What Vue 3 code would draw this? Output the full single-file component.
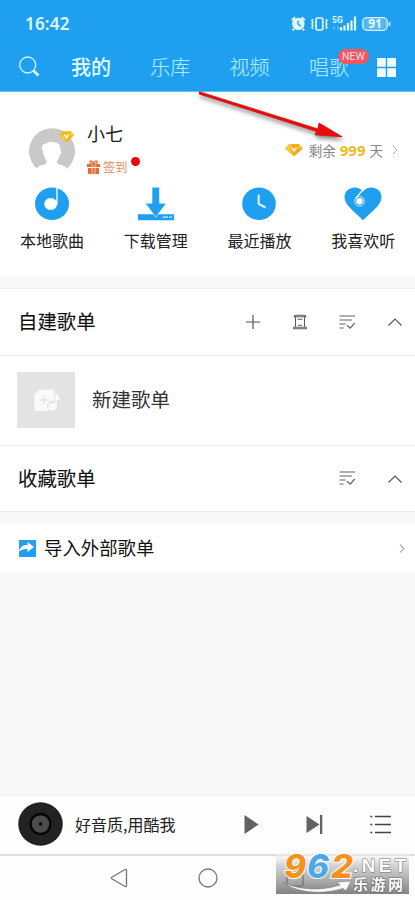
<script setup>
const tabs = [
  { label: '我的', active: true },
  { label: '乐库' },
  { label: '视频' },
  { label: '唱歌', badge: 'NEW' },
]
const shortcuts = [
  { id: 'local', label: '本地歌曲' },
  { id: 'download', label: '下载管理' },
  { id: 'recent', label: '最近播放' },
  { id: 'like', label: '我喜欢听' },
]
</script>

<template>
  <div class="screen">
    <header class="top">
      <div class="status">
        <span class="clock">16:42</span>
        <svg class="status-icons" width="102" height="18" viewBox="0 0 102 18">
          <circle cx="8.3" cy="9" r="6.2" fill="#e2f8ff" />
          <path d="M1.800 5.200 5 2.300M14.800 5.200 11.600 2.300M3.800 13.800 2.500 15.300M12.800 13.800l1.300 1.500" stroke="#e2f8ff" stroke-width="2" />
          <path d="M8 5.400V9l2.600 2.300" fill="none" stroke="#1f9ff0" stroke-width="1.300" />
          <rect x="26" y="3" width="6.800" height="12" rx="1.500" fill="none" stroke="#e2f8ff" stroke-width="1.700" />
          <path d="M23 4.200l-1.200 1.600 1.200 1.600-1.200 1.600L23 10.600l-1.200 1.600 1.200 1.600M35.800 4.200l1.200 1.600-1.200 1.600 1.200 1.600-1.200 1.600 1.200 1.600-1.200 1.600" fill="none" stroke="#e2f8ff" stroke-width="1.400" />
          <text x="42" y="8" class="net">5G</text>
          <path d="M45 11.500l-2 1.500 2 1.500M47 11.500l2 1.500-2 1.500" stroke="#7ccaf8" fill="none" />
          <path d="M51 15.500v-3.500M54.500 15.500v-5M58 15.500v-7.500M61.500 15.500V5.500M65 15.500V1.500" stroke="#e2f8ff" stroke-width="2.200" />
          <rect x="72.800" y="2.700" width="24.400" height="12.600" rx="4" fill="#54b6f4" stroke="#d5f3ff" stroke-width="1.300" />
          <path d="M99.500 7v4" stroke="#d5f3ff" stroke-width="1.700" />
          <text x="85" y="13.200" text-anchor="middle" class="level">91</text>
        </svg>
      </div>
      <nav class="nav">
        <svg class="search" width="22" height="22" viewBox="0 0 22 22" fill="none" stroke="#d6faff">
          <circle cx="8.700" cy="9" r="8" stroke-width="1.300" />
          <path d="M14.200 14.500l5.300 5" stroke-width="2.700" />
        </svg>
        <span v-for="t in tabs" :key="t.label" class="tab" :class="{ active: t.active }">
          {{ t.label }}<i v-if="t.badge" class="badge">{{ t.badge }}</i>
        </span>
        <svg class="grid" width="19" height="19" viewBox="0 0 19 19" fill="#f1fdff">
          <path d="M0 0h8.800v8.800H0zM10.200 0H19v8.800h-8.800zM0 10.200h8.800V19H0zM10.200 10.200H19V19h-8.800z" />
        </svg>
      </nav>
    </header>

    <section class="profile">
      <div class="avatar">
        <svg width="46" height="42" viewBox="0 0 46 42">
          <path d="M8.500 41A23 23 0 1 1 37.500 41Z" fill="#c9c9c9" />
          <path d="M7 42c1-3.500 4-4.500 7.500-5.300 3-.8 4-2 3-4.200-1.800-1.800-2.500-4-2.700-6-1.300-.8-1-2.500-.3-3-2-1.500-2.300-4-1-5.500.3-1.500 1.500-2.500 3-2 2.500-2.600 6.500-3 9.500-1.500 4 .3 6 3.500 5.700 8.500 1.300.7.800 3-.7 3.500-.3 2.500-1.300 4.500-2.800 6-.7 2.500.3 3.500 3.300 4.200 3.500.8 6 2 7 5.300z" fill="#fff" />
        </svg>
        <svg class="avatar-gem" width="15" height="12" viewBox="0 0 18 14">
          <path d="M4 0h10l4 5-9 9-9-9z" fill="#f7b41e" />
          <path d="M0 5h5l4 9zM14 0l4 5h-5z" fill="#f5cd4c" />
          <path d="M6.500 4 9 8l2.500-4" fill="none" stroke="#fff8c8" stroke-width="2" />
        </svg>
      </div>
      <div class="who">
        <div class="name">小七</div>
        <div class="checkin">
          <svg width="13" height="14" viewBox="0 0 13 14">
            <path d="M0 4h13v3H0zM1 8h11v6H1z" fill="#e96b3c" />
            <path d="M6.500 4C3 4 2.300 2.500 3 1.400 4 .1 6 1.500 6.500 4 7 1.500 9 .1 10 1.400c.7 1.100 0 2.600-3.500 2.600" fill="none" stroke="#e96b3c" stroke-width="1.200" />
            <path d="M5 4v10M8 4v10" stroke="#fbd9c8" stroke-width=".8" />
          </svg>
          <span>签到</span><b class="dot"></b>
        </div>
      </div>
      <div class="vip">
        <svg width="18" height="14" viewBox="0 0 18 14">
          <path d="M4 1h10l4 4.500-9 8-9-8z" fill="#f5a91f" />
          <path d="M0 5.500h5l4 8zM14 1l4 4.500h-5zM4 1h3L5 5.500H0z" fill="#f6c946" />
          <path d="M6.500 4.500 9 8l2.500-3.500" fill="none" stroke="#fff5bd" stroke-width="1.800" />
        </svg>
        <span class="left">剩余</span><span class="days">999</span><span>天</span>
        <svg class="more" width="6" height="10" viewBox="0 0 6 10" fill="none" stroke="#b5b5b5"><path d="M1 1l4 4-4 4" /></svg>
      </div>
    </section>

    <section class="shortcuts">
      <div v-for="s in shortcuts" :key="s.id" class="shortcut">
        <svg v-if="s.id === 'local'" width="38" height="34" viewBox="0 0 38 34">
          <ellipse cx="19" cy="16.700" rx="17" ry="16.300" fill="#1f9ff0" />
          <ellipse cx="17.700" cy="17" rx="6.500" ry="6" fill="#fff" />
          <path d="M24 1V17" stroke="#fff" stroke-width="1.300" />
        </svg>
        <svg v-else-if="s.id === 'download'" width="38" height="34" viewBox="0 0 38 34">
          <path d="M1 27.200h36v6H1z" fill="#1f9ff0" />
          <path d="M15 .2h7.500v16h6.800L18.800 30.200 8.200 16.200H15z" fill="#1f9ff0" stroke="#fff" stroke-width=".6" />
          <path d="M25.500 30.200H31M32 30.200h3" stroke="#c9efff" stroke-width="1.300" />
        </svg>
        <svg v-else-if="s.id === 'recent'" width="38" height="34" viewBox="0 0 38 34">
          <ellipse cx="19" cy="16.700" rx="16.800" ry="16.300" fill="#1f9ff0" />
          <path d="M18.700 7.500V17l6.800 3.500" fill="none" stroke="#e0f8ff" stroke-width="2" />
        </svg>
        <svg v-else width="38" height="34" viewBox="0 0 38 34">
          <path d="M19 33.200C12 26 .5 18.500.5 10 .5 0 14-2.800 19 4.500 24-2.800 37.500 0 37.500 10 37.500 18.500 26 26 19 33.200z" fill="#1f9ff0" />
          <circle cx="15.500" cy="14.300" r="3.200" fill="#fff" />
          <circle cx="15.500" cy="14.300" r="4.800" fill="none" stroke="#e8faff" stroke-width=".9" />
          <path d="M11.300 12 18.700 3" stroke="#fff" stroke-width="1.200" />
        </svg>
        <span>{{ s.label }}</span>
      </div>
    </section>

    <section class="row own">
      <h2>自建歌单</h2>
      <svg class="plus" width="14" height="14" viewBox="0 0 14 14" stroke="#555" stroke-width="1.200"><path d="M7 0v14M0 7h14" /></svg>
      <svg class="restore" width="14" height="16" viewBox="0 0 14 16" fill="none" stroke="#5c5c5c" stroke-width="1.100">
        <path d="M3 1.300h8c1.500 0 2 .7 2 1.500H1c0-.8.500-1.500 2-1.500zM2.500 3v10M11.500 3v10M.8 13.200h12.400v1.600H.8zM4.500 5.300h5M5 11.200h4" />
      </svg>
      <svg class="sort" width="17" height="15" viewBox="0 0 17 15" fill="none" stroke="#626262" stroke-width="1.200">
        <path d="M.5 1h15.500M.5 5h12.500M.5 9h6M.5 13h4M8 10.200l3.200 3 4.500-5.200" />
      </svg>
      <svg class="up" width="14" height="8" viewBox="0 0 14 8" fill="none" stroke="#555" stroke-width="1.200"><path d="M.5 7.500 7 1l6.500 6.500" /></svg>
    </section>

    <section class="create">
      <div class="tile">
        <svg width="28" height="23" viewBox="0 0 28 23">
          <path d="M5.500.5h13c1.500 0 2 .5 2 2V22H2.500C1 22 .5 21.500.5 20V5.500z" fill="#fafafa" />
          <path d="M10 6.500v9M5.500 11h9" stroke="#dedede" />
          <circle cx="18.500" cy="17.300" r="5.600" fill="#e3e3e3" />
          <path d="M20 5h5v13h-5z" fill="#e3e3e3" />
          <ellipse cx="18.500" cy="17.800" rx="4.300" ry="3.800" fill="#fafafa" />
          <path d="M21.200 5.500h2.300c.5 2.500 3 3.500 3.200 6.500-1-1-2.200-1.300-3.900-1.500V18h-1.600z" fill="#fafafa" />
        </svg>
      </div>
      <span>新建歌单</span>
    </section>

    <section class="row saved">
      <h2>收藏歌单</h2>
      <svg class="sort" width="17" height="15" viewBox="0 0 17 15" fill="none" stroke="#626262" stroke-width="1.200">
        <path d="M.5 1h15.500M.5 5h12.500M.5 9h6M.5 13h4M8 10.200l3.200 3 4.500-5.200" />
      </svg>
      <svg class="up" width="14" height="8" viewBox="0 0 14 8" fill="none" stroke="#555" stroke-width="1.200"><path d="M.5 7.500 7 1l6.500 6.500" /></svg>
    </section>

    <section class="import">
      <svg width="17" height="17" viewBox="0 0 17 17">
        <path d="M0 0h17v17H0z" fill="#229ff0" />
        <path d="M0 11.800C1 6.500 4 5 8.500 5V2L15 7l-6.500 5V9C5 8.800 2 9.500 0 11.800z" fill="#fff" />
      </svg>
      <span>导入外部歌单</span>
      <svg class="more" width="6" height="9" viewBox="0 0 6 9" fill="none" stroke="#b0b0b0" stroke-width="1.200"><path d="M1 .5l4 4-4 4" /></svg>
    </section>

    <div class="blank"></div>

    <footer class="player">
      <svg class="disc" width="45" height="44" viewBox="0 0 45 44">
        <ellipse cx="22.500" cy="22" rx="22.300" ry="21.700" fill="#222" />
        <circle cx="22.500" cy="22" r="11" fill="#030303" />
        <circle cx="22.500" cy="22" r="8.800" fill="#4a4a4a" />
        <circle cx="22.500" cy="22" r="5" fill="none" stroke="#555" stroke-width=".7" />
        <circle cx="22.500" cy="22" r="1.700" fill="#050505" />
      </svg>
      <span class="song">好音质,用酷我</span>
      <svg class="play" width="15" height="19" viewBox="0 0 15 19"><path d="M.5 0 14.500 9.500.5 19z" fill="#626262" /></svg>
      <svg class="next" width="17" height="19" viewBox="0 0 17 19"><path d="M.5 1 13.500 9.500.5 18z" fill="#626262" /><path d="M14 0h2.300v19H14z" fill="#626262" /></svg>
      <svg class="queue" width="21" height="19" viewBox="0 0 21 19" stroke="#444" stroke-width="1.700">
        <path d="M.3 1.500h2M5 1.500h16M.3 9.500h2M5 9.500h16M.3 17.500h2M5 17.500h16" />
      </svg>
    </footer>

    <footer class="system">
      <svg class="back" width="18" height="20" viewBox="0 0 18 20" fill="none" stroke="#777" stroke-width="1.300"><path d="M15 1.500 1.800 9.300q-1 .7 0 1.400L15 18.500q1.500.5 1.500-1v-15q0-1.500-1.500-1z" /></svg>
      <svg class="home" width="20" height="20" viewBox="0 0 20 20" fill="none" stroke="#777" stroke-width="1.300"><circle cx="10" cy="10" r="9" /></svg>
    </footer>

    <svg class="arrow" width="156" height="60" viewBox="0 0 156 60">
      <path d="M3.500 1.800 122 39 123 33 146 46.800 119 44.800 120.500 41.500 3 4z" fill="#ec0a0a" stroke="#cc1212" stroke-width=".8" />
    </svg>

    <svg class="watermark" width="133" height="42" viewBox="0 0 133 42">
      <defs>
        <linearGradient id="shade" x2="0" y2="1">
          <stop offset="0" stop-color="#fff" stop-opacity=".35" />
          <stop offset=".3" stop-color="#ccc" stop-opacity=".8" />
          <stop offset="1" stop-color="#777" stop-opacity=".92" />
        </linearGradient>
      </defs>
      <path d="M0 0h133v42H0z" fill="url(#shade)" />
      <rect x="11" y="18" width="16" height="16" rx="1.500" fill="none" stroke="#6e6e6e" stroke-width="1.200" />
      <path d="M7 30.500c15 7 37 9 57 2.500l-3-3 14-1-5 10-3-2.500C46 43 21 41 7 30.500z" fill="#fafafa" stroke="#777" stroke-width=".6" />
      <g class="digits">
        <text x="8" y="25.500" textLength="22" lengthAdjust="spacingAndGlyphs" fill="#f7921e">9</text>
        <text x="31" y="25.500" textLength="22" lengthAdjust="spacingAndGlyphs" fill="#4ba9e6">6</text>
        <text x="55" y="25.500" textLength="22" lengthAdjust="spacingAndGlyphs" fill="#f7921e">2</text>
      </g>
      <text x="77" y="20" textLength="53" lengthAdjust="spacing" class="net-name">.NET</text>
      <text x="77" y="37.500" textLength="50" class="site">乐游网</text>
    </svg>
  </div>
</template>

<style>
body { background: #f8f8f8; overflow: hidden; }
</style>

<style scoped>
* { box-sizing: border-box; }
svg { display: block; flex: none; }
.screen {
  position: relative;
  display: flex;
  flex-direction: column;
  width: 415px;
  height: 900px;
  overflow: hidden;
  background: #f8f8f8;
  color: #222;
  font-family: "Noto Sans CJK SC", sans-serif;
  white-space: nowrap;
}
.top { height: 92px; background: #1f9ff0; border-bottom: 1px solid #68bbef; }
.status { display: flex; height: 47px; align-items: center; padding: 0 23px 0 25px; justify-content: space-between; color: #dcfaff; }
.clock { font: 600 17px/20px "Noto Sans", sans-serif; letter-spacing: .2px; }
.net { font: bold 8.500px Roboto, sans-serif; fill: #e2f8ff; }
.level { font: bold 12px "Noto Sans", sans-serif; fill: #f0fcff; }
.nav { display: flex; height: 40px; align-items: center; padding: 0 19px; }
.search { margin-right: 30px; }
.tab { position: relative; width: 40px; margin-right: 39.300px; color: #aee8ff; font-size: 20px; line-height: 30px; font-weight: 300; -webkit-text-stroke: .2px #aee8ff; }
.tab.active { color: #e3fdff; font-weight: 500; -webkit-text-stroke: 0; }
.tab:nth-last-child(2) { margin-right: 28.500px; }
.badge { position: absolute; left: 29px; top: -3px; width: 31px; height: 15px; border-radius: 8px; background: #ee5861; color: #ffdfe4; font: 10.500px/15px Roboto, sans-serif; text-align: center; -webkit-text-stroke: 0; }
.profile { display: flex; height: 91px; background: #fff; padding: 36px 17px 0 29px; }
.avatar { position: relative; width: 46px; height: 42px; }
.avatar-gem { position: absolute; left: 30px; top: 3px; }
.who { margin-left: 12px; }
.name { height: 26px; margin-top: -8px; font-size: 18px; line-height: 26px; }
.checkin { display: flex; align-items: center; height: 18px; margin-top: 12px; color: #e88863; font-size: 12.300px; }
.checkin span { margin-left: 3px; }
.dot { width: 9px; height: 9px; margin: -11px 0 0 3px; border-radius: 50%; background: #f00505; }
.vip { display: flex; align-items: center; height: 20px; margin: 12px 0 0 auto; color: #858585; font-size: 13.500px; line-height: 20px; }
.vip span { margin-top: -1px; }
.vip .left { margin-left: 6px; }
.vip .days { margin: 0 4px; color: #efb91f; font: bold 15px/20px "Noto Sans", sans-serif; }
.more { margin-left: 9px; }
.shortcuts { display: grid; grid-template-columns: repeat(4, 103.800px); height: 94px; background: #fff; padding-top: 4px; }
.shortcut { display: flex; flex-direction: column; align-items: center; font-size: 16px; line-height: 24px; }
.shortcut span { margin-top: 7px; }
.row { display: flex; align-items: center; background: #fff; padding: 0 13.500px 0 18px; border-top: 1px solid #f1f1f1; border-bottom: 1px solid #eee; }
.own { height: 68px; margin-top: 11px; }
h2 { margin: -2px auto 0 0; font-size: 19.400px; font-weight: 400; line-height: 30px; color: #111; -webkit-text-stroke: .1px #111; }
.restore { margin-left: 33px; }
.sort { margin-left: 32px; }
.up { margin-left: 32px; }
.create { display: flex; align-items: center; height: 89px; padding: 0 0 2px 17px; background: #fff; font-size: 19.500px; color: #333; }
.create span { margin-top: -2px; }
.tile { display: flex; align-items: center; justify-content: center; width: 58px; height: 56px; margin-right: 17px; padding-top: 1px; padding-left: 3px; background: #e3e3e3; }
.saved { height: 67px; }
.import { display: flex; align-items: center; height: 50px; margin-top: 11px; padding: 0 10px 0 19px; background: #fff; font-size: 18.400px; color: #111; }
.import span { margin: -2px 0 0 8px; }
.import .more { margin-left: auto; }
.blank { flex: 1; }
.player { display: flex; align-items: center; height: 61px; padding: 0 24px 2px 18px; background: #fdfdfd; border-top: 1px solid #f2f2f2; border-bottom: 2px solid #dedede; }
.song { width: 102px; margin-left: 12px; font-size: 16px; }
.play { margin-left: auto; }
.next { margin-left: 47px; }
.queue { margin-left: 47px; }
.system { display: flex; align-items: center; height: 44px; padding-left: 109.500px; background: #fdfdfd; }
.home { margin-left: 70px; }
.arrow { position: absolute; left: 196px; top: 90px; filter: drop-shadow(1px 3px 2px #0007); }
.watermark { position: absolute; left: 276px; top: 852px; overflow: visible; }
.digits { font: italic 800 32px Inter, sans-serif; stroke: #fff; stroke-width: 2px; paint-order: stroke; }
.net-name { font: bold 18.500px "Liberation Sans", sans-serif; fill: #fff; stroke: #777; stroke-width: 1px; paint-order: stroke; }
.site { font: bold 15px "Noto Sans CJK SC", sans-serif; fill: #fff; stroke: #666; stroke-width: 1.200px; paint-order: stroke; }
</style>
